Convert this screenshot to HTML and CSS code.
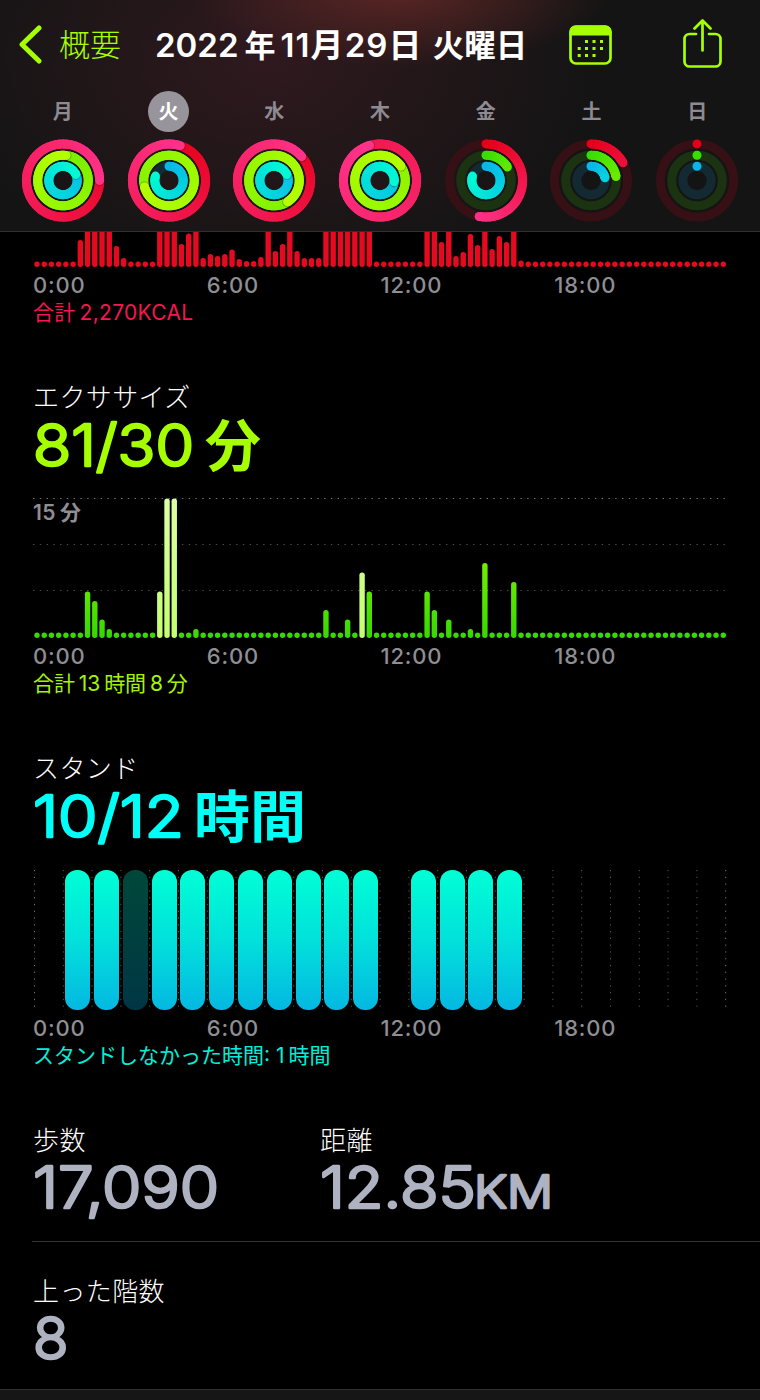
FILE: index.html
```
<!DOCTYPE html>
<html lang="ja">
<head>
  <meta charset="UTF-8" />
  <meta name="viewport" content="width=device-width, initial-scale=1.0"/>
  <title>アクティビティ</title>
  <link rel="stylesheet" href="styles.css">
</head>
<body>
  <header>
    <nav class="topbar">
      <a class="back" href="#">
        <svg width="24" height="40" viewBox="0 0 24 40"><path d="M21 3 L4 19.500 L21 36"/></svg>
        <span>概要</span>
      </a>
      <h1><span>2022</span><span class="nen">年</span><span class="data">11月29日</span><span class="youbi">火曜日</span></h1>
      <svg class="calendar" width="44" height="40" viewBox="0 0 44 40">
        <rect x="1.5" y="1.5" width="40" height="37" rx="5.5"/>
        <path class="solid" d="M0.5 10.5V6.5a6 6 0 0 1 6-6h30a6 6 0 0 1 6 6v4z"/>
        <path class="dots" d="M16 16.5h3M23.5 16.5h3M31 16.5h3M8.7 23.5h3M16 23.5h3M23.5 23.5h3M31 23.5h3M8.7 30.5h3M16 30.5h3M23.5 30.5h3"/>
      </svg>
      <svg class="share" width="40" height="50" viewBox="0 0 40 50">
        <path d="M13 15H6.5a5 5 0 0 0-5 5v22.500a5 5 0 0 0 5 5h26a5 5 0 0 0 5-5V20a5 5 0 0 0-5-5H26"/>
        <path d="M19.500 31.500V2M11.500 9.500L19.500 1.500L27.500 9.500"/>
      </svg>
    </nav>
    <div class="week" id="semana"></div>
  </header>

  <main>
    <section class="move">
      <div class="chart short" id="move"></div>
      <div class="hours"><span>0:00</span><span>6:00</span><span>12:00</span><span>18:00</span></div>
      <p class="total">合計<span class="sp"></span>2,270KCAL</p>
    </section>

    <section class="exercise">
      <h2>エクササイズ</h2>
      <svg class="value" width="400" height="66">
        <text x="0" y="53" textLength="161" lengthAdjust="spacingAndGlyphs">81/30</text>
        <text class="unit" x="172" y="53">分</text>
      </svg>
      <div class="chart" id="exercise"><span class="max">15<span class="sp"></span>分</span></div>
      <div class="hours"><span>0:00</span><span>6:00</span><span>12:00</span><span>18:00</span></div>
      <p class="total">合計<span class="sp"></span>13<span class="sp"></span>時間<span class="sp"></span>8<span class="sp"></span>分</p>
    </section>

    <section class="stand">
      <h2>スタンド</h2>
      <svg class="value" width="400" height="66">
        <text x="0" y="53" textLength="151" lengthAdjust="spacingAndGlyphs">10/12</text>
        <text class="unit" x="161" y="53">時間</text>
      </svg>
      <div class="chart" id="stand"></div>
      <div class="hours"><span>0:00</span><span>6:00</span><span>12:00</span><span>18:00</span></div>
      <p class="total">スタンドしなかった時間: 1<span class="sp"></span>時間</p>
    </section>

    <section class="stats">
      <div>
        <h2>歩数</h2>
        <svg class="value" width="280" height="66"><text x="0" y="52" textLength="186" lengthAdjust="spacingAndGlyphs">17,090</text></svg>
      </div>
      <div>
        <h2>距離</h2>
        <svg class="value" width="280" height="66">
          <text x="0" y="52" textLength="156" lengthAdjust="spacingAndGlyphs">12.85</text>
          <text class="km" x="154" y="52" textLength="79" lengthAdjust="spacingAndGlyphs">KM</text>
        </svg>
      </div>
    </section>

    <section class="floors">
      <h2>上った階数</h2>
      <svg class="value" width="280" height="66"><text x="0" y="52">8</text></svg>
    </section>
  </main>

  <footer></footer>

  <script src="script.js"></script>
</body>
</html>
```
FILE: styles.css
```
* { margin: 0; padding: 0; box-sizing: border-box; }
body {
  font-family: Inter, "Noto Sans CJK JP", sans-serif;
  background: #000;
  color: #fff;
  width: 760px;
  height: 1400px;
  overflow: hidden;
  display: flex;
  flex-direction: column;
}
header {
  height: 232px;
  flex: none;
  border-bottom: 1px solid #303030;
  background:
    radial-gradient(ellipse 210px 75px at 400px -8px, rgba(125, 48, 42, 0.6), transparent),
    radial-gradient(ellipse 330px 230px at 270px 60px, rgba(65, 28, 37, 0.6), transparent),
    #141414;
}

/* Topo */
.topbar {
  height: 90px;
  padding: 0 37px 0 18px;
  display: flex;
  align-items: center;
}
.topbar svg {
  fill: none;
  stroke: #a6ff00;
  stroke-width: 2.7;
  stroke-linecap: round;
  stroke-linejoin: round;
}
.back {
  width: 137px;
  display: flex;
  align-items: center;
  gap: 17px;
  color: #a6ff00;
  font-size: 31px;
  font-weight: 300;
  line-height: 40px;
  text-decoration: none;
}
.topbar .back svg { stroke-width: 5; }
h1 {
  width: 413.500px;
  font-size: 33px;
  font-weight: 600;
  line-height: 40px;
  white-space: nowrap;
}
.nen {
  margin: 0 5px 0 6px;
  font-size: 31px;
}
.data { letter-spacing: 1.100px; }
.youbi {
  margin-left: 10px;
  font-size: 31.500px;
}
.topbar .calendar .solid { fill: #a6ff00; stroke: none; }
.topbar .calendar .dots { stroke-width: 3; stroke-linecap: butt; }
.share {
  margin-left: auto;
  margin-top: -2px;
}

/* Semana */
.week {
  display: grid;
  grid-template-columns: repeat(7, 1fr);
  padding: 1px 10px 0;
}
.day {
  display: flex;
  flex-direction: column;
  align-items: center;
  gap: 8px;
}
.day svg { overflow: visible; }
.day span {
  width: 41px;
  height: 41px;
  border-radius: 50%;
  color: #8e8a91;
  font-size: 20px;
  font-weight: 600;
  line-height: 43px;
  text-align: center;
}
.day.active span {
  background: #98949b;
  color: #fff;
}

main { flex: 1; }
section { padding-left: 33px; }
section + section { padding-top: 56px; }
h2 {
  font-size: 26px;
  font-weight: 300;
  line-height: 32px;
  letter-spacing: 0.400px;
}
.sp {
  display: inline-block;
  width: 4px;
}

/* Números grandes */
.value {
  display: block;
  margin-top: -1px;
  height: 65px;
  overflow: visible;
  fill: currentColor;
  stroke: currentColor;
  stroke-width: 2.600px;
  stroke-linejoin: round;
  font-size: 58px;
  font-weight: 300;
}
.value .unit {
  stroke-width: 0;
  font-size: 56px;
  font-weight: 700;
}
.value .km { font-size: 45px; }
.exercise .value { color: #a6ff00; }
.stand .value { color: #00fff6; }
.stats .value, .floors .value { color: #aeb2c1; }

/* Gráficos */
.chart {
  position: relative;
  width: 694px;
  height: 140px;
  padding: 0 1.500px;
  margin-top: 20px;
  display: flex;
}
.chart.short {
  height: 35px;
  margin-top: 0;
  align-items: flex-end;
  overflow: hidden;
}
.stand .chart { margin-top: 21px; }
.chart .plot {
  flex: none;
  margin-left: -1.500px;
}
.chart .grid {
  position: absolute;
  left: 0;
  top: 0;
}
.chart line {
  stroke: #77777a;
  stroke-width: 1;
}
.move rect { fill: #e60a20; }
.slot {
  position: relative;
  flex: 1;
  height: 140px;
  padding: 0 1.800px 0 2px;
}
.slot i {
  display: block;
  height: 100%;
  border-radius: 12px;
}
.slot .on { background: linear-gradient(#00ffd5, #02e2db 48%, #04b8e2); }
.slot .missed { background: linear-gradient(#00483a, #003644); }
.max {
  position: absolute;
  left: 0;
  top: 1px;
  color: #8e8e93;
  font-size: 21px;
  font-weight: 600;
  line-height: 27px;
  letter-spacing: 0.400px;
}
.hours {
  width: 695px;
  margin-top: 5px;
  display: grid;
  grid-template-columns: repeat(4, 1fr);
  color: #8e8e93;
  font-size: 22px;
  font-weight: 500;
  line-height: 27px;
  letter-spacing: 0.800px;
}
.total {
  font-size: 21px;
  font-weight: 400;
  line-height: 27px;
}
.move .total { letter-spacing: 0.300px; color: #f5174f; }
.exercise .total { letter-spacing: -0.100px; color: #a3f500; }
.stand .total { color: #00efdc; }

.stats {
  height: 173px;
  display: grid;
  grid-template-columns: 287px 1fr;
  background: linear-gradient(#333, #333) 32px 100% / 100% 1px no-repeat;
}
.floors { margin-top: -22px; }
footer {
  height: 11px;
  flex: none;
  border-top: 1px solid #303030;
  background: #161616;
}
```
FILE: script.js
```
const dias = [
  { nome: "月", aneis: [1.25, 2.02, 1.18] },
  { nome: "火", aneis: [1.05, 2.71, 0.8], ativo: true },
  { nome: "水", aneis: [1.137, 2.41, 1.18] },
  { nome: "木", aneis: [1.955, 3.155, 1.265] },
  { nome: "金", aneis: [0.53, 0.16, 0.8] },
  { nome: "土", aneis: [0.17, 0.225, 0.22] },
  { nome: "日", aneis: [0, 0, 0] }
];

const estilos = [
  { r: 36.6, trilha: "#361015", de: [228, 0, 24], ate: [255, 50, 138] },
  { r: 25.3, trilha: "#1c3312", de: [56, 222, 0], ate: [180, 255, 0] },
  { r: 14.2, trilha: "#132a33", de: [8, 182, 232], ate: [0, 250, 212] }
];

function ponto(r, volta) {
  const a = volta * 2 * Math.PI;
  return [41 + r * Math.sin(a), 40.5 - r * Math.cos(a)];
}

function mistura(e, t) {
  return "rgb(" + e.de.map((c, i) => Math.round(c + (e.ate[i] - c) * t)).join(",") + ")";
}

// Desenha um anel em pequenos arcos para a cor mudar ao longo da volta
function anel(e, valor) {
  let svg = `<circle cx="41" cy="40.5" r="${e.r}" fill="none" stroke="${e.trilha}" stroke-width="9"/>`;
  const fim = Math.min(1, valor * 1.8);
  const inicio = Math.max(0, valor - 1);
  const passos = Math.ceil((valor - inicio) * 60);

  if (valor <= 1) {
    const [x, y] = ponto(e.r, 0);
    svg += `<circle cx="${x}" cy="${y}" r="4.5" fill="${mistura(e, 0)}"/>`;
  }
  for (let i = 0; i < passos; i++) {
    const a = inicio + (valor - inicio) * i / passos;
    const b = inicio + (valor - inicio) * (i + 1) / passos;
    const [x1, y1] = ponto(e.r, a);
    const [x2, y2] = ponto(e.r, Math.min(b + 0.02, valor));
    svg += `<path d="M${x1} ${y1}A${e.r} ${e.r} 0 0 1 ${x2} ${y2}" fill="none" stroke="${mistura(e, fim * b / valor)}" stroke-width="9"/>`;
  }
  if (valor > 0) {
    const [x, y] = ponto(e.r, valor);
    if (valor > 1) {
      // sombra na ponta
      const [sx, sy] = ponto(e.r, valor + 0.9 / (2 * Math.PI * e.r));
      svg += `<circle cx="${sx}" cy="${sy}" r="4.4" fill="#000" opacity="0.3"/>`;
    }
    svg += `<circle cx="${x}" cy="${y}" r="4.5" fill="${mistura(e, fim)}"/>`;
  }
  return svg;
}

document.getElementById("semana").innerHTML = dias.map(d => `
  <div class="day${d.ativo ? " active" : ""}">
    <span>${d.nome}</span>
    <svg width="82" height="82">${d.aneis.map((v, i) => anel(estilos[i], v)).join("")}</svg>
  </div>`).join("");

// Alturas das barras, uma a cada 15 minutos
const move = {
  6: 27, 7: 60, 8: 60, 9: 60, 10: 60, 11: 21, 12: 9, 17: 60, 18: 60, 19: 60,
  20: 23, 21: 33.5, 22: 60, 23: 9, 24: 13, 25: 11, 26: 13, 27: 17.5, 28: 8,
  29: 6, 30: 6, 31: 10, 32: 60, 33: 16, 34: 23, 35: 60, 36: 16, 37: 9, 38: 9,
  39: 9, 40: 60, 41: 60, 42: 60, 43: 60, 44: 60, 45: 60, 46: 60, 54: 60,
  55: 60, 56: 25, 57: 60, 58: 11, 59: 15, 60: 33, 61: 22, 62: 60, 63: 18,
  64: 31, 65: 25, 66: 60, 67: 6.5
};
const exercise = {
  7: 46.5, 8: 37, 9: 18.5, 10: 9, 17: 46.5, 18: 139.5, 19: 139.5, 22: 9, 40: 28,
  43: 18.5, 45: 65.5, 46: 46.5, 54: 46.5, 55: 28, 57: 18.5, 60: 9, 62: 75, 66: 56
};
const treino = [17, 18, 19, 45];

function barras(dados, cor) {
  let svg = "";
  for (let i = 0; i < 96; i++) {
    const h = dados[i] || 5.4;
    svg += `<rect x="${(1.3 + i * 7.224).toFixed(2)}" y="${140 - h}" width="5.4" height="${h}" rx="2.7"${cor ? ` fill="${cor(i)}"` : ""}/>`;
  }
  return svg;
}

let linhas = "";
[0.5, 46.5, 92.5].forEach((y, i) => {
  linhas += `<line x1="0" x2="692" y1="${y}" y2="${y}" stroke-dasharray="1.4 5.37" opacity="${i ? 0.65 : 1}"/>`;
});

document.getElementById("move").innerHTML = `<svg class="plot" width="694" height="140">${barras(move)}</svg>`;
document.getElementById("exercise").insertAdjacentHTML("afterbegin", `
  <svg class="plot" width="694" height="140">
    <defs>
      <linearGradient id="verde" gradientUnits="userSpaceOnUse" x1="0" y1="140" x2="0" y2="0">
        <stop offset="0" stop-color="#35d900"/><stop offset="1" stop-color="#a8ff00"/>
      </linearGradient>
      <linearGradient id="claro" gradientUnits="userSpaceOnUse" x1="0" y1="140" x2="0" y2="0">
        <stop offset="0" stop-color="#c4ff6e"/><stop offset="1" stop-color="#dcffa6"/>
      </linearGradient>
    </defs>
    ${linhas}
    ${barras(exercise, i => treino.includes(i) ? "url(#claro)" : "url(#verde)")}
  </svg>`);

// Horas em pé
linhas = "";
let horas = "";
for (let h = 0; h <= 24; h++) {
  const x = 1.5 + h * 28.8;
  linhas += `<line x1="${x}" x2="${x}" y1="0" y2="138" stroke-dasharray="1.2 5.58" opacity="${h % 24 ? 0.75 : 1}"/>`;
}
for (let h = 0; h < 24; h++) {
  const ok = (h >= 1 && h <= 11) || (h >= 13 && h <= 16);
  horas += `<div class="slot">${ok ? `<i class="${h === 3 ? "missed" : "on"}"></i>` : ""}</div>`;
}
document.getElementById("stand").innerHTML = `<svg class="grid" width="694" height="140">${linhas}</svg>${horas}`;
```
